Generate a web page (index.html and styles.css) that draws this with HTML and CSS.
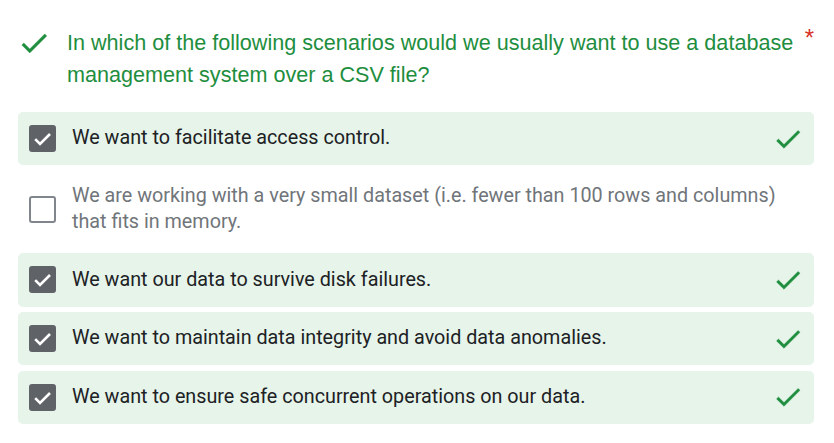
FILE: index.html
```html
<!DOCTYPE html>
<html lang="en">
<head>
<meta charset="utf-8">
<title>Question</title>
<link rel="stylesheet" href="styles.css">
</head>
<body>
<div class="question">
  <div class="q-header">
    <svg class="q-icon" viewBox="0 0 24 24" aria-hidden="true"><path d="M9 16.17L4.83 12l-1.42 1.41L9 19 21 7l-1.41-1.41z"/></svg>
    <div class="q-title">In which of the following scenarios would we usually want to use a database management system over a CSV file?</div>
    <span class="q-required">*</span>
  </div>
  <div class="options">
    <div class="option correct">
      <span class="box checked"><svg viewBox="0 0 27 27" aria-hidden="true"><polyline points="6.2,14.2 11,19 21,9"/></svg></span>
      <div class="label">We want to facilitate access control.</div>
      <svg class="mark" viewBox="0 0 24 24" aria-hidden="true"><path d="M9 16.17L4.83 12l-1.42 1.41L9 19 21 7l-1.41-1.41z"/></svg>
    </div>
    <div class="option">
      <span class="box"></span>
      <div class="label muted">We are working with a very small dataset (i.e. fewer than 100 rows and columns) that fits in memory.</div>
    </div>
    <div class="option correct">
      <span class="box checked"><svg viewBox="0 0 27 27" aria-hidden="true"><polyline points="6.2,14.2 11,19 21,9"/></svg></span>
      <div class="label">We want our data to survive disk failures.</div>
      <svg class="mark" viewBox="0 0 24 24" aria-hidden="true"><path d="M9 16.17L4.83 12l-1.42 1.41L9 19 21 7l-1.41-1.41z"/></svg>
    </div>
    <div class="option correct">
      <span class="box checked"><svg viewBox="0 0 27 27" aria-hidden="true"><polyline points="6.2,14.2 11,19 21,9"/></svg></span>
      <div class="label">We want to maintain data integrity and avoid data anomalies.</div>
      <svg class="mark" viewBox="0 0 24 24" aria-hidden="true"><path d="M9 16.17L4.83 12l-1.42 1.41L9 19 21 7l-1.41-1.41z"/></svg>
    </div>
    <div class="option correct">
      <span class="box checked"><svg viewBox="0 0 27 27" aria-hidden="true"><polyline points="6.2,14.2 11,19 21,9"/></svg></span>
      <div class="label">We want to ensure safe concurrent operations on our data.</div>
      <svg class="mark" viewBox="0 0 24 24" aria-hidden="true"><path d="M9 16.17L4.83 12l-1.42 1.41L9 19 21 7l-1.41-1.41z"/></svg>
    </div>
  </div>
</div>
</body>
</html>
```

FILE: styles.css
```css
* { box-sizing: border-box; }

html, body {
  margin: 0;
  padding: 0;
  background: #ffffff;
}

.question {
  width: 834px;
  padding: 27px 20px 0 18px;
}

.q-header {
  display: flex;
  align-items: flex-start;
}

.q-icon {
  width: 34px;
  height: 34px;
  fill: #1e8e3e;
  stroke: #1e8e3e;
  stroke-width: 0.3;
  flex: none;
  margin-left: -1px;
  margin-top: -1px;
}

.q-title {
  flex: 1;
  margin-left: 16px;
  font-family: "Liberation Sans", Arial, sans-serif;
  font-size: 21.6px;
  line-height: 32px;
  color: #1e8e3e;
}

.q-required {
  flex: none;
  margin-left: 6px;
  font-family: "Liberation Sans", Arial, sans-serif;
  font-size: 24px;
  line-height: 22px;
  color: #d93025;
}

.options {
  margin-top: 21px;
  display: flex;
  flex-direction: column;
  gap: 5.33px;
}

.option {
  display: flex;
  align-items: center;
  min-height: 53.33px;
  padding: 0 10px 0 11px;
  border-radius: 5px;
}

.option.correct {
  background: #e6f4ea;
}

.box {
  flex: none;
  width: 27px;
  height: 27px;
  border-radius: 3px;
  border: 2.67px solid #80868b;
  display: flex;
}

.box.checked {
  background: #5f6368;
  border: none;
}

.box svg {
  width: 27px;
  height: 27px;
  fill: none;
  stroke: #ffffff;
  stroke-width: 2.6;
}

.label {
  flex: 1;
  margin-left: 16px;
  padding: 12px 0;
  font-family: Roboto, "Noto Sans", sans-serif;
  font-size: 19.75px;
  line-height: 26.67px;
  color: #202124;
}

.label.muted {
  color: #70757a;
}

.mark {
  flex: none;
  width: 32px;
  height: 32px;
  fill: #1e8e3e;
  stroke: #1e8e3e;
  stroke-width: 0.3;
}
```
